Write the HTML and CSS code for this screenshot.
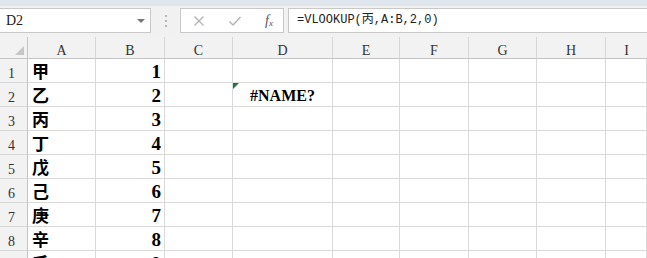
FILE: index.html
```html
<!DOCTYPE html>
<html lang="zh">
<head>
<meta charset="utf-8">
<title>Sheet</title>
<link rel="stylesheet" href="styles.css">
</head>
<body>
<div class="app">
  <div class="topstrip"></div>
  <div class="toolbar">
    <div class="namebox">
      <span class="name">D2</span>
      <span class="caret"></span>
    </div>
    <div class="grip"><i></i><i></i><i></i></div>
    <div class="fxbox">
      <svg class="ico" width="12" height="12" viewBox="0 0 12 12"><path d="M1.5 1.5 L10.5 10.5 M10.5 1.5 L1.5 10.5" stroke="#b4b4b4" stroke-width="1.4" fill="none"/></svg>
      <svg class="ico" width="14" height="12" viewBox="0 0 14 12"><path d="M1.5 6.5 L5 10 L12.5 2" stroke="#b4b4b4" stroke-width="1.5" fill="none"/></svg>
      <span class="fx">f<sub>x</sub></span>
    </div>
    <div class="formula">=VLOOKUP(丙,A:B,2,0)</div>
  </div>
  <div class="sheet">
    <div class="hd corner"><span class="tri"></span></div>
    <div class="hd">A</div>
    <div class="hd">B</div>
    <div class="hd">C</div>
    <div class="hd">D</div>
    <div class="hd">E</div>
    <div class="hd">F</div>
    <div class="hd">G</div>
    <div class="hd">H</div>
    <div class="hd last">I</div>

    <div class="rh">1</div><div class="c t">甲</div><div class="c n">1</div><div class="c"></div><div class="c"></div><div class="c"></div><div class="c"></div><div class="c"></div><div class="c"></div><div class="c"></div>
    <div class="rh">2</div><div class="c t">乙</div><div class="c n">2</div><div class="c"></div><div class="c err"><span class="flag"></span>#NAME?</div><div class="c"></div><div class="c"></div><div class="c"></div><div class="c"></div><div class="c"></div>
    <div class="rh">3</div><div class="c t">丙</div><div class="c n">3</div><div class="c"></div><div class="c"></div><div class="c"></div><div class="c"></div><div class="c"></div><div class="c"></div><div class="c"></div>
    <div class="rh">4</div><div class="c t">丁</div><div class="c n">4</div><div class="c"></div><div class="c"></div><div class="c"></div><div class="c"></div><div class="c"></div><div class="c"></div><div class="c"></div>
    <div class="rh">5</div><div class="c t">戊</div><div class="c n">5</div><div class="c"></div><div class="c"></div><div class="c"></div><div class="c"></div><div class="c"></div><div class="c"></div><div class="c"></div>
    <div class="rh">6</div><div class="c t">己</div><div class="c n">6</div><div class="c"></div><div class="c"></div><div class="c"></div><div class="c"></div><div class="c"></div><div class="c"></div><div class="c"></div>
    <div class="rh">7</div><div class="c t">庚</div><div class="c n">7</div><div class="c"></div><div class="c"></div><div class="c"></div><div class="c"></div><div class="c"></div><div class="c"></div><div class="c"></div>
    <div class="rh">8</div><div class="c t">辛</div><div class="c n">8</div><div class="c"></div><div class="c"></div><div class="c"></div><div class="c"></div><div class="c"></div><div class="c"></div><div class="c"></div>
    <div class="rh">9</div><div class="c t">壬</div><div class="c n">9</div><div class="c"></div><div class="c"></div><div class="c"></div><div class="c"></div><div class="c"></div><div class="c"></div><div class="c"></div>
  </div>
</div>
</body>
</html>
```
FILE: styles.css
```css
* { box-sizing: border-box; }
html, body {
  margin: 0;
  padding: 0;
  width: 647px;
  height: 258px;
  overflow: hidden;
  background: #ffffff;
}
.app {
  width: 647px;
  height: 258px;
  overflow: hidden;
  font-family: "Liberation Mono", "Noto Sans CJK SC", monospace;
}
.topstrip {
  height: 6px;
  background: #dfe5ed;
}
.toolbar {
  height: 31px;
  background: #f1f1f1;
  display: flex;
  align-items: flex-start;
  padding-top: 2px;
}
.namebox {
  width: 151px;
  height: 25px;
  background: #fff;
  border: 1px solid #c8c8c8;
  border-left: none;
  display: flex;
  align-items: center;
  justify-content: space-between;
  padding: 0 5px 0 6px;
}
.name {
  font-family: "Liberation Serif", serif;
  font-size: 14px;
  color: #222;
}
.caret {
  width: 0;
  height: 0;
  border-left: 4px solid transparent;
  border-right: 4px solid transparent;
  border-top: 4px solid #777;
}
.grip {
  width: 29px;
  height: 25px;
  display: flex;
  flex-direction: column;
  align-items: center;
  justify-content: center;
  gap: 3px;
}
.grip i {
  display: block;
  width: 2px;
  height: 2px;
  background: #b8b8b8;
}
.fxbox {
  width: 104px;
  height: 25px;
  background: #fff;
  border: 1px solid #c8c8c8;
  display: flex;
  align-items: center;
  padding: 0 10px 0 12px;
  justify-content: space-between;
}
.ico { display: block; }
.fx {
  font-family: "Liberation Serif", serif;
  font-style: italic;
  font-size: 14px;
  color: #555;
  line-height: 1;
}
.fx sub {
  font-size: 9px;
  vertical-align: -1px;
}
.formula {
  flex: 1;
  height: 25px;
  margin-left: 4px;
  background: #fff;
  border: 1px solid #c8c8c8;
  border-right: none;
  font-size: 12px;
  line-height: 23px;
  padding-left: 8px;
  color: #222;
  white-space: nowrap;
}
.sheet {
  display: grid;
  grid-template-columns: 28px 68px 69px 68px 100px 67px 69px 68px 69px 41px;
  grid-template-rows: 22px repeat(9, 24px);
}
.hd {
  background: #f2f2f2;
  border-right: 1px solid #d6d6d6;
  border-bottom: 1px solid #c4c4c4;
  font-family: "Liberation Serif", serif;
  font-size: 14px;
  color: #333;
  display: flex;
  align-items: center;
  justify-content: center;
  padding-top: 6px;
}
.hd.last { border-right: none; }
.corner {
  position: relative;
  border-right: 1px solid #c4c4c4;
}
.tri {
  position: absolute;
  right: 3px;
  bottom: 3px;
  width: 0;
  height: 0;
  border-left: 9px solid transparent;
  border-bottom: 9px solid #c6c6c6;
}
.rh {
  background: #f2f2f2;
  border-right: 1px solid #c4c4c4;
  border-bottom: 1px solid #d6d6d6;
  font-family: "Liberation Serif", serif;
  font-size: 14px;
  color: #333;
  display: flex;
  align-items: flex-end;
  padding-left: 8px;
  padding-bottom: 0;
}
.c {
  border-right: 1px solid #d9d9d9;
  border-bottom: 1px solid #d9d9d9;
  display: flex;
  align-items: flex-end;
  color: #000;
  white-space: nowrap;
  overflow: hidden;
}
.c.t {
  font-family: "Noto Sans CJK SC", sans-serif;
  font-weight: 700;
  font-size: 17px;
  line-height: 22px;
  padding-left: 4px;
}
.c.n {
  font-family: "Liberation Serif", serif;
  font-weight: 700;
  font-size: 19px;
  line-height: 20px;
  justify-content: flex-end;
  padding-right: 3px;
}
.c.err {
  position: relative;
  font-family: "Liberation Serif", serif;
  font-weight: 700;
  font-size: 16px;
  line-height: 20px;
  justify-content: center;
}
.flag {
  position: absolute;
  left: 0;
  top: 0;
  width: 0;
  height: 0;
  border-top: 6px solid #217346;
  border-right: 6px solid transparent;
}
```
